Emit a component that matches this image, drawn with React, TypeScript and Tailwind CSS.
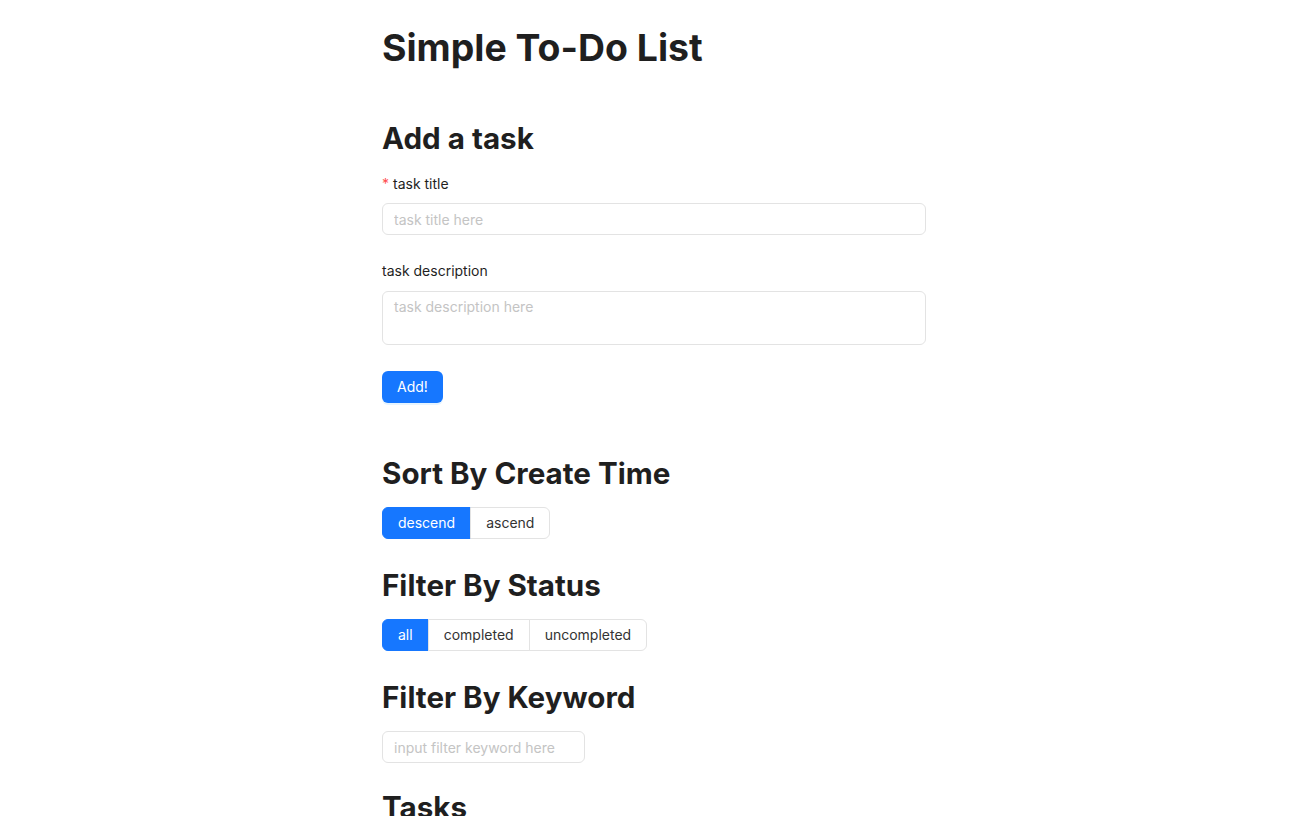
import React from "react";

const font = { fontFamily: "Inter, 'Noto Sans', 'Liberation Sans', sans-serif" };

function H2({ children, className = "" }: { children: React.ReactNode; className?: string }) {
  return (
    <h2 className={`text-[29.6px] leading-[36px] font-bold text-[#1f1f1f] ${className}`}>{children}</h2>
  );
}

function Group({ items, active }: { items: string[]; active: number }) {
  return (
    <div className="flex">
      {items.map((it, i) => {
        const first = i === 0;
        const last = i === items.length - 1;
        const on = i === active;
        return (
          <button
            key={it}
            className={`h-8 px-[15px] text-sm border ${
              on ? "bg-[#1677ff] border-[#1677ff] text-white" : "bg-white border-[#e3e3e3] text-[#333333]"
            } ${first ? "rounded-l-md" : "-ml-px"} ${last ? "rounded-r-md" : ""}`}
          >
            {it}
          </button>
        );
      })}
    </div>
  );
}

export default function App() {
  return (
    <div className="h-[816px] overflow-hidden bg-white" style={font}>
      <div className="mx-auto w-[544px] pt-[26px]">
        <h1 className="text-[37.4px] leading-[44px] font-bold text-[#1f1f1f]">Simple To-Do List</h1>
        <H2 className="mt-[50px]">Add a task</H2>
        <div className="mt-[17px] text-sm leading-[22px] text-[#1f1f1f]">
          <span className="text-[#ff4d4f] mr-1">*</span>task title
        </div>
        <input
          placeholder="task title here"
          className="mt-2 w-full h-8 px-[11px] text-sm border border-[#e3e3e3] rounded-md outline-none placeholder:text-[#c4c4c4]"
        />
        <div className="mt-[25px] text-sm leading-[22px] text-[#1f1f1f]">task description</div>
        <textarea
          placeholder="task description here"
          className="mt-[9px] block w-full h-[54px] px-[11px] py-1 text-sm leading-[22px] border border-[#e3e3e3] rounded-md outline-none resize-none placeholder:text-[#c4c4c4]"
        />
        <button className="mt-[26px] h-8 px-[15px] rounded-md bg-[#1677ff] text-white text-sm shadow-[0_2px_0_rgba(5,145,255,0.1)]">
          Add!
        </button>
        <H2 className="mt-[52px]">Sort By Create Time</H2>
        <div className="mt-4">
          <Group items={["descend", "ascend"]} active={0} />
        </div>
        <H2 className="mt-[28px]">Filter By Status</H2>
        <div className="mt-4">
          <Group items={["all", "completed", "uncompleted"]} active={0} />
        </div>
        <H2 className="mt-[28px]">Filter By Keyword</H2>
        <input
          placeholder="input filter keyword here"
          className="mt-4 block w-[203px] h-8 px-[11px] text-sm border border-[#e3e3e3] rounded-md outline-none placeholder:text-[#c4c4c4]"
        />
        <H2 className="mt-[26px]">Tasks</H2>
      </div>
    </div>
  );
}
